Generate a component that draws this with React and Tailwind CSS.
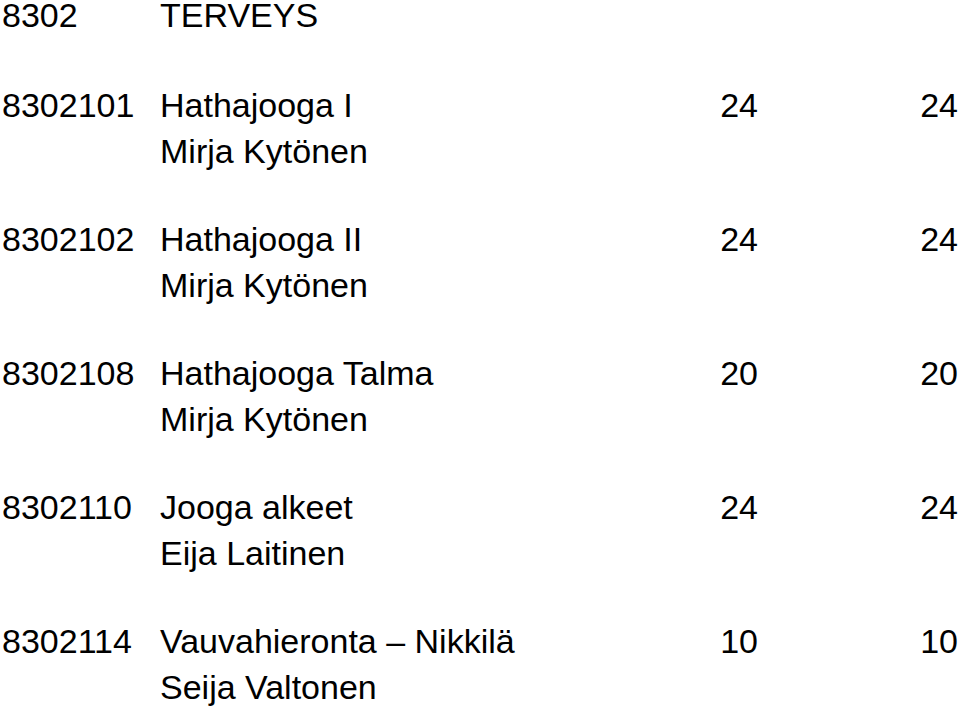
const entries = [
  { code: "8302101", title: "Hathajooga I", teacher: "Mirja Kytönen", a: 24, b: 24 },
  { code: "8302102", title: "Hathajooga II", teacher: "Mirja Kytönen", a: 24, b: 24 },
  { code: "8302108", title: "Hathajooga Talma", teacher: "Mirja Kytönen", a: 20, b: 20 },
  { code: "8302110", title: "Jooga alkeet", teacher: "Eija Laitinen", a: 24, b: 24 },
  { code: "8302114", title: "Vauvahieronta – Nikkilä", teacher: "Seija Valtonen", a: 10, b: 10 },
];

export default function App() {
  return (
    <div
      className="bg-white text-black text-[34px] px-[2px] min-h-[707px] overflow-hidden"
      style={{ fontFamily: "'Liberation Sans', Arial, Helvetica, sans-serif" }}
    >
      <div className="grid grid-cols-[158px_1fr] leading-[31px] whitespace-nowrap">
        <div>8302</div>
        <div>TERVEYS</div>
      </div>
      <div className="mt-[51px] flex flex-col gap-[42px]">
        {entries.map((e) => (
          <div key={e.code} className="grid grid-cols-[158px_1fr_100px_200px] leading-[46px] whitespace-nowrap">
            <div>{e.code}</div>
            <div>{e.title}</div>
            <div className="text-right">{e.a}</div>
            <div className="text-right">{e.b}</div>
            <div />
            <div>{e.teacher}</div>
          </div>
        ))}
      </div>
    </div>
  );
}
